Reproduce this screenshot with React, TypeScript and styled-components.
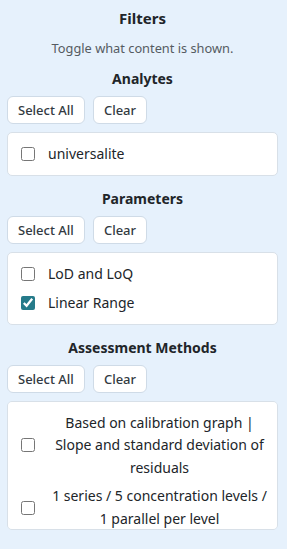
import { FC, useState } from 'react';
import styled, { createGlobalStyle } from 'styled-components';

const GlobalStyle = createGlobalStyle`
  html, body {
    margin: 0;
    padding: 0;
    background: #e6f1fc;
  }
  body {
    font-family: "Noto Sans", "Open Sans", sans-serif;
    color: #212529;
  }
`;

type Option = { id: string; label: string };

const sections: { title: string; options: Option[]; centered?: boolean }[] = [
  { title: 'Analytes', options: [{ id: 'a1', label: 'universalite' }] },
  {
    title: 'Parameters',
    options: [
      { id: 'p1', label: 'LoD and LoQ' },
      { id: 'p2', label: 'Linear Range' },
    ],
  },
  {
    title: 'Assessment Methods',
    centered: true,
    options: [
      { id: 'm1', label: 'Based on calibration graph | Slope and standard deviation of residuals' },
      { id: 'm2', label: '1 series / 5 concentration levels / 1 parallel per level' },
    ],
  },
];

const App: FC = () => {
  const [checked, setChecked] = useState<Record<string, boolean>>({ p2: true });
  const toggle = (id: string) => setChecked(c => ({ ...c, [id]: !c[id] }));
  const setMany = (opts: Option[], val: boolean) =>
    setChecked(c => {
      const next = { ...c };
      opts.forEach(o => (next[o.id] = val));
      return next;
    });

  return (
    <WrapperSC>
      <GlobalStyle />
      <TitleSC>Filters</TitleSC>
      <SubtitleSC>Toggle what content is shown.</SubtitleSC>
      {sections.map(section => (
        <SectionSC key={section.title}>
          <HeadingSC>{section.title}</HeadingSC>
          <ButtonRowSC>
            <ButtonSC onClick={() => setMany(section.options, true)}>Select All</ButtonSC>
            <ButtonSC onClick={() => setMany(section.options, false)}>Clear</ButtonSC>
          </ButtonRowSC>
          <PanelSC>
            {section.options.map(opt => (
              <OptionSC key={opt.id} centered={section.centered}>
                <input type="checkbox" checked={!!checked[opt.id]} onChange={() => toggle(opt.id)} />
                <span>{opt.label}</span>
              </OptionSC>
            ))}
          </PanelSC>
        </SectionSC>
      ))}
    </WrapperSC>
  );
};

export default App;

const WrapperSC = styled('div')`
  padding: 7px 9px 16px 7px;
  display: flex;
  flex-direction: column;
`;

const TitleSC = styled('div')`
  font-size: 15px;
  font-weight: 700;
  text-align: center;
  line-height: 22px;
`;

const SubtitleSC = styled('div')`
  font-size: 12.8px;
  color: #555b62;
  text-align: center;
  margin-top: 9px;
  line-height: 20px;
`;

const SectionSC = styled('div')`
  display: flex;
  flex-direction: column;
  margin-top: 10px;
  & + & {
    margin-top: 12px;
  }
`;

const HeadingSC = styled('div')`
  font-size: 14px;
  font-weight: 700;
  text-align: center;
  line-height: 22px;
`;

const ButtonRowSC = styled('div')`
  display: flex;
  gap: 8px;
  margin-top: 6px;
`;

const ButtonSC = styled('button')`
  font-family: inherit;
  font-size: 13px;
  font-weight: 500;
  color: #333a42;
  background: #fff;
  border: 1px solid #cfdbe7;
  border-radius: 6px;
  height: 28px;
  padding: 0 10px;
  cursor: pointer;
`;

const PanelSC = styled('div')`
  box-sizing: border-box;
  margin-top: 8px;
  max-height: 129px;
  overflow-y: auto;
  scrollbar-width: none;
  background: #fff;
  border: 1px solid #d8e0e8;
  border-radius: 5px;
  padding: 6.5px 0;
  display: flex;
  flex-direction: column;
`;

const OptionSC = styled('label')<{ centered?: boolean }>`
  box-sizing: border-box;
  display: flex;
  align-items: center;
  gap: 13px;
  min-height: 29px;
  flex-shrink: 0;
  padding: 3px 6px 3px 13px;
  font-size: 14px;
  line-height: 22.5px;
  cursor: pointer;
  input {
    margin: 0;
    width: 14px;
    height: 14px;
    accent-color: #267b8a;
    flex-shrink: 0;
  }
  span {
    flex: 1;
    text-align: ${p => (p.centered ? 'center' : 'left')};
  }
`;
